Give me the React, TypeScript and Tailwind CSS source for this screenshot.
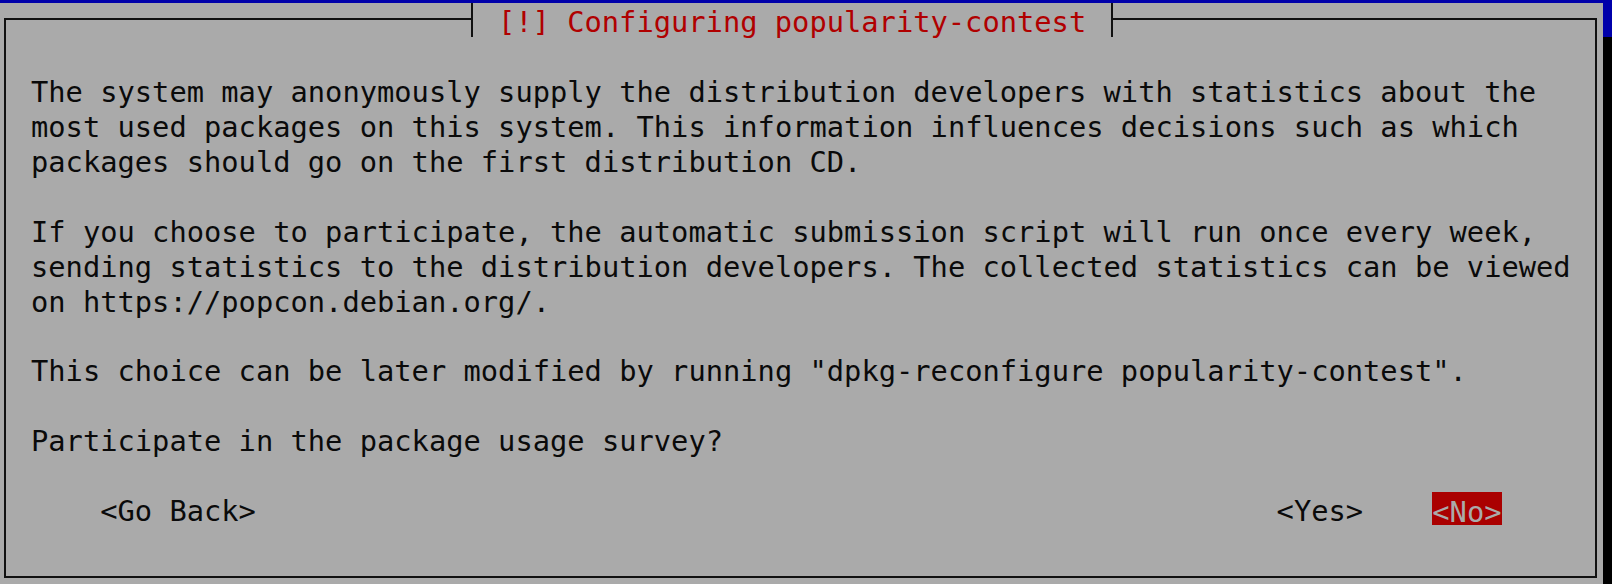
const paragraphs = [
  [
    "The system may anonymously supply the distribution developers with statistics about the",
    "most used packages on this system. This information influences decisions such as which",
    "packages should go on the first distribution CD.",
  ],
  [
    "If you choose to participate, the automatic submission script will run once every week,",
    "sending statistics to the distribution developers. The collected statistics can be viewed",
    "on https://popcon.debian.org/.",
  ],
  ['This choice can be later modified by running "dpkg-reconfigure popularity-contest".'],
  ["Participate in the package usage survey?"],
];

const App = () => {
  return (
    <div className="flex h-[584px] w-[1612px] overflow-hidden bg-[#0000aa] font-['DejaVu_Sans_Mono',monospace] text-[28.74px] text-[#0a0a0a]">
      {/* dialog window */}
      <div className="mt-[2.5px] flex-1 bg-[#aaaaaa] pl-[4px] pr-[6px] pt-[15.5px]">
        <div className="relative h-[560px] border-2 border-[#111]">
          <div className="absolute left-[465px] top-[-17.5px] h-[34.95px] whitespace-pre border-x-2 border-[#111] bg-[#aaaaaa] px-[25px] pt-[2.5px] leading-[34.95px] text-[#b00000]">
            [!] Configuring popularity-contest
          </div>

          <div className="whitespace-pre pl-[25px] pt-[54.9px] leading-[34.95px]">
            {paragraphs.map((lines, i) => (
              <div key={i} className={i > 0 ? "mt-[34.95px]" : ""}>
                {lines.map((line) => (
                  <div key={line}>{line}</div>
                ))}
              </div>
            ))}
          </div>

          {/* buttons */}
          <div className="mt-[32.45px] flex h-[34.95px] whitespace-pre pl-[94.2px] pr-[93.5px]">
            <span className="pt-[2.5px] leading-[34.95px]">&lt;Go Back&gt;</span>
            <span className="ml-auto pt-[2.5px] leading-[34.95px]">&lt;Yes&gt;</span>
            <span className="ml-[69.2px] h-[33px] bg-[#aa0000] pt-[6.9px] leading-[26.1px] text-[#aaaaaa]">
              &lt;No&gt;
            </span>
          </div>
        </div>
      </div>
      {/* drop shadow */}
      <div className="mt-[37px] w-[9px] bg-black" />
    </div>
  );
};

export default App;
